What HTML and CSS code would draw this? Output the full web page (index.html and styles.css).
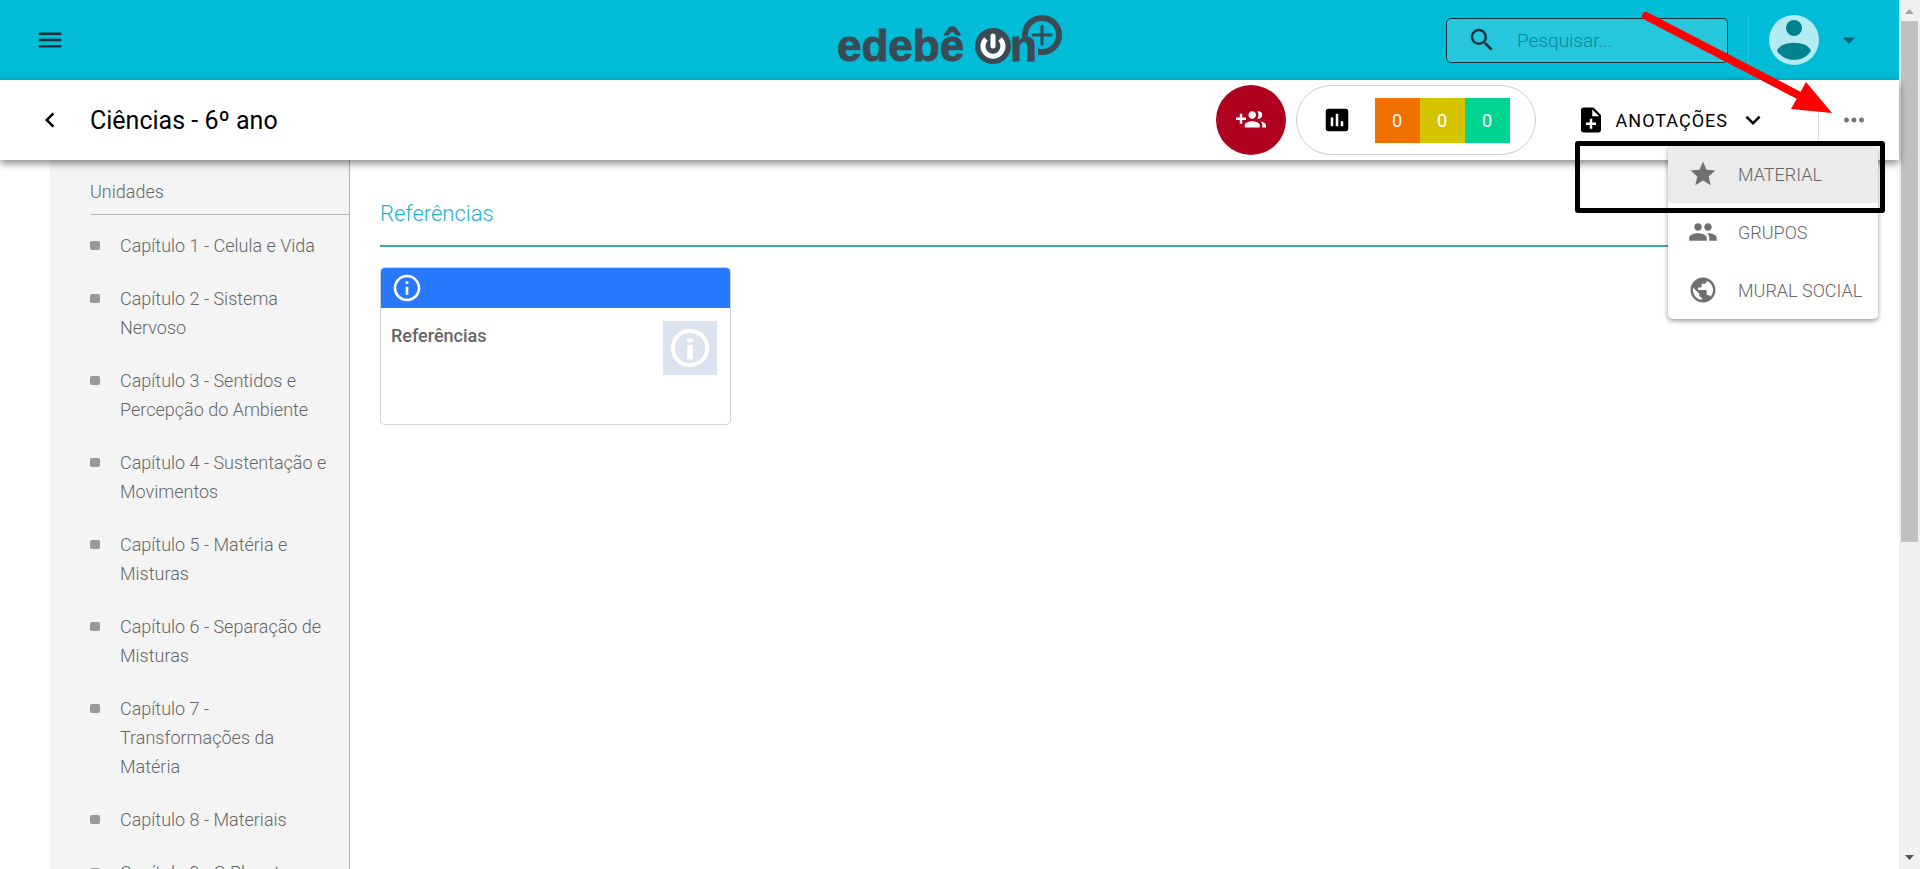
FILE: index.html
```html
<!DOCTYPE html>
<html lang="pt-BR">
    <head>
        <meta charset="utf-8">
        <title>Ciências - 6º ano</title>
        <link rel="stylesheet" href="styles.css">
    </head>
    <body>
        <div class="app">
            <header class="topbar">
                <button type="button" class="icon-button" aria-label="Menu">
                    <svg class="icon" viewBox="0 0 24 24"><path d="M3 18h18v-2H3v2zm0-5h18v-2H3v2zm0-7v2h18V6H3z"/></svg>
                </button>
                <a href="#" class="logo" aria-label="edebê On+">
                    <svg width="230" height="60" viewBox="0 0 230 60">
                        <text x="2" y="51" class="logo-text">edebê</text>
                        <circle cx="207" cy="25" r="17" fill="none" stroke="#3b4a54" stroke-width="6"/>
                        <path d="M207 16v18M198 25h18" fill="none" stroke="#3b4a54" stroke-width="3" stroke-linecap="round"/>
                        <path d="M176 27h13l2 3c4-4 11-3 13 1l-1 4v17h-27z" fill="#00bcd7"/>
                        <text x="175" y="51" class="logo-text">n</text>
                        <circle cx="158" cy="36" r="18" fill="#3b4a54"/>
                        <path d="M151 29a10 10 0 1 0 14 0" fill="none" stroke="#fff" stroke-width="5"/>
                        <path d="M158 26v10" fill="none" stroke="#fff" stroke-width="5" stroke-linecap="round"/>
                    </svg>
                </a>
                <div class="topbar-right">
                    <label class="search">
                        <svg class="icon" viewBox="0 0 24 24"><path d="M15.5 14h-.79l-.28-.27A6.471 6.471 0 0 0 16 9.5 6.5 6.5 0 1 0 9.5 16c1.61 0 3.09-.59 4.23-1.57l.27.28v.79l5 4.99L20.49 19l-4.99-5zm-6 0C7.01 14 5 11.99 5 9.5S7.01 5 9.5 5 14 7.01 14 9.5 11.99 14 9.5 14z"/></svg>
                        <input type="text" placeholder="Pesquisar..." aria-label="Pesquisar">
                    </label>
                    <button type="button" class="user" aria-label="Conta">
                        <svg class="avatar" viewBox="0 0 50 50">
                            <circle cx="25" cy="25" r="25" fill="#b2ebf2"/>
                            <circle cx="25" cy="13" r="8" fill="#00838f"/>
                            <path d="M8 36c3-11 31-11 34 0-8 12-26 12-34 0z" fill="#00838f"/>
                        </svg>
                        <svg class="icon caret" viewBox="0 0 24 24"><path d="M7 10l5 5 5-5z"/></svg>
                    </button>
                </div>
            </header>

            <div class="subbar">
                <button type="button" class="icon-button" aria-label="Voltar">
                    <svg class="icon" viewBox="0 0 24 24"><path d="M15.41 7.41L14 6l-6 6 6 6 1.41-1.41L10.83 12z"/></svg>
                </button>
                <h1>Ciências - 6º ano</h1>
                <button type="button" class="add-group" aria-label="Adicionar grupo">
                    <svg class="icon" viewBox="0 0 24 24"><path d="M8 10H5V7H3v3H0v2h3v3h2v-3h3v-2zm10 1c1.66 0 2.99-1.34 2.99-3S19.66 5 18 5c-.32 0-.63.05-.91.14.57.81.9 1.79.9 2.86s-.34 2.04-.9 2.86c.28.09.59.14.91.14zm-5 0c1.66 0 2.99-1.34 2.99-3S14.66 5 13 5c-1.66 0-3 1.34-3 3s1.34 3 3 3zm6.62 2.16c.83.73 1.38 1.66 1.38 2.84v2h3v-2c0-1.54-2.37-2.49-4.38-2.84zM13 13c-2 0-6 1-6 3v2h12v-2c0-2-4-3-6-3z"/></svg>
                </button>
                <div class="scores">
                    <svg class="icon" viewBox="0 0 24 24"><path d="M19 3H5c-1.1 0-2 .9-2 2v14c0 1.1.9 2 2 2h14c1.1 0 2-.9 2-2V5c0-1.1-.9-2-2-2zM9 17H7v-7h2v7zm4 0h-2V7h2v10zm4 0h-2v-4h2v4z"/></svg>
                    <div class="score-list">
                        <span class="score orange">0</span>
                        <span class="score yellow">0</span>
                        <span class="score green">0</span>
                    </div>
                </div>
                <button type="button" class="notes">
                    <svg class="icon" viewBox="0 0 24 24"><path d="M14 2H6c-1.1 0-1.99.9-1.99 2L4 20c0 1.1.89 2 1.99 2H18c1.1 0 2-.9 2-2V8l-6-6zm2 14h-3v3h-2v-3H8v-2h3v-3h2v3h3v2zm-3-7V3.5L18.5 9H13z"/></svg>
                    <span>ANOTAÇÕES</span>
                    <svg class="icon" viewBox="0 0 24 24"><path d="M16.59 8.59L12 13.17 7.41 8.59 6 10l6 6 6-6z"/></svg>
                </button>
                <div class="more">
                    <button type="button" class="icon-button" aria-label="Mais opções">
                        <svg class="icon" viewBox="0 0 24 24"><path d="M6 10c-1.1 0-2 .9-2 2s.9 2 2 2 2-.9 2-2-.9-2-2-2zm12 0c-1.1 0-2 .9-2 2s.9 2 2 2 2-.9 2-2-.9-2-2-2zm-6 0c-1.1 0-2 .9-2 2s.9 2 2 2 2-.9 2-2-.9-2-2-2z"/></svg>
                    </button>
                    <nav class="more-menu">
                        <a href="#" class="active">
                            <svg class="icon" viewBox="0 0 24 24"><path d="M12 17.27L18.18 21l-1.64-7.03L22 9.24l-7.19-.61L12 2 9.19 8.63 2 9.24l5.46 4.73L5.82 21z"/></svg>
                            MATERIAL
                        </a>
                        <a href="#">
                            <svg class="icon" viewBox="0 0 24 24"><path d="M16 11c1.66 0 2.99-1.34 2.99-3S17.66 5 16 5c-1.66 0-3 1.34-3 3s1.34 3 3 3zm-8 0c1.66 0 2.99-1.34 2.99-3S9.66 5 8 5C6.34 5 5 6.34 5 8s1.34 3 3 3zm0 2c-2.33 0-7 1.17-7 3.5V19h14v-2.5c0-2.33-4.67-3.5-7-3.5zm8 0c-.29 0-.62.02-.97.05 1.16.84 1.97 1.97 1.97 3.45V19h6v-2.5c0-2.33-4.67-3.5-7-3.5z"/></svg>
                            GRUPOS
                        </a>
                        <a href="#">
                            <svg class="icon" viewBox="0 0 24 24"><path d="M12 2C6.48 2 2 6.48 2 12s4.48 10 10 10 10-4.48 10-10S17.52 2 12 2zm-1 17.93c-3.95-.49-7-3.85-7-7.93 0-.62.08-1.21.21-1.79L9 15v1c0 1.1.9 2 2 2v1.93zm6.9-2.54c-.26-.81-1-1.39-1.9-1.39h-1v-3c0-.55-.45-1-1-1H8v-2h2c.55 0 1-.45 1-1V7h2c1.1 0 2-.9 2-2v-.41c2.93 1.19 5 4.06 5 7.41 0 2.08-.8 3.97-2.1 5.39z"/></svg>
                            MURAL SOCIAL
                        </a>
                        <div class="highlight"></div>
                    </nav>
                </div>
                <svg class="arrow" viewBox="0 0 194 106" width="194" height="106">
                    <path d="M4 4l154 80" stroke="#f00" stroke-width="8" stroke-linecap="round"/>
                    <path d="M190 101l-41-4 15-27z" fill="#f00"/>
                </svg>
            </div>

            <div class="content">
                <aside class="sidebar">
                    <h2>Unidades</h2>
                    <ul>
                        <li><a href="#">Capítulo 1 - Celula e Vida</a></li>
                        <li><a href="#">Capítulo 2 - Sistema Nervoso</a></li>
                        <li><a href="#">Capítulo 3 - Sentidos e Percepção do Ambiente</a></li>
                        <li><a href="#">Capítulo 4 - Sustentação e Movimentos</a></li>
                        <li><a href="#">Capítulo 5 - Matéria e Misturas</a></li>
                        <li><a href="#">Capítulo 6 - Separação de Misturas</a></li>
                        <li><a href="#">Capítulo 7 - Transformações da Matéria</a></li>
                        <li><a href="#">Capítulo 8 - Materiais</a></li>
                        <li><a href="#">Capítulo 9 - O Planeta</a></li>
                    </ul>
                </aside>
                <main>
                    <h2>Referências</h2>
                    <article class="card">
                        <div class="card-header">
                            <svg viewBox="0 0 24 24" width="32" height="32"><path d="M11 17h2v-6h-2v6zm1-15C6.48 2 2 6.48 2 12s4.48 10 10 10 10-4.48 10-10S17.52 2 12 2zm0 18c-4.41 0-8-3.59-8-8s3.59-8 8-8 8 3.59 8 8-3.59 8-8 8zM11 9h2V7h-2v2z"/></svg>
                        </div>
                        <div class="card-body">
                            <h3>Referências</h3>
                            <div class="thumb">
                                <svg viewBox="0 0 24 24" width="46" height="46"><path d="M10.500 18h3v-7.500h-3v7.500zm1.500-16C6.48 2 2 6.48 2 12s4.48 10 10 10 10-4.48 10-10S17.52 2 12 2zm0 18c-4.41 0-8-3.59-8-8s3.59-8 8-8 8 3.59 8 8-3.59 8-8 8zM10.500 9h3V7h-3v2z"/></svg>
                            </div>
                        </div>
                    </article>
                </main>
            </div>
        </div>

        <div class="scrollbar">
            <svg viewBox="0 0 21 21" width="21" height="21"><path d="M6 14h9l-4.5-5z" fill="#a3a3a3"/></svg>
            <div class="track"><div class="thumb-bar"></div></div>
            <svg viewBox="0 0 21 21" width="21" height="21"><path d="M6 7h9l-4.5 5z" fill="#505050"/></svg>
        </div>
    </body>
</html>
```

FILE: styles.css
```css
* {
    box-sizing: border-box;
}

body {
    margin: 0;
    display: flex;
    height: 100vh;
    overflow: hidden;
    background: #fff;
    font-family: Roboto, "Noto Sans", sans-serif;
    font-size: 18px;
    font-weight: 300;
    color: #666;
}

h1, h2, h3 {
    margin: 0;
    font-weight: 300;
}

a {
    color: inherit;
    text-decoration: none;
}

button {
    padding: 0;
    border: none;
    background: none;
    font: inherit;
    color: inherit;
    cursor: pointer;
}

svg {
    display: block;
    flex: none;
}

.icon {
    width: 30px;
    height: 30px;
    fill: currentColor;
}

.app {
    flex: 1;
    min-width: 0;
    display: flex;
    flex-direction: column;
}

/* Top bar */
.topbar {
    flex: none;
    display: grid;
    grid-template-columns: 1fr auto 1fr;
    align-items: center;
    height: 80px;
    padding: 0 35px;
    background: #00bcd7;
    color: #123038;
}

.topbar .icon-button {
    justify-self: start;
}

.logo-text {
    font-family: "Liberation Sans", Arial, sans-serif;
    font-size: 44px;
    font-weight: 700;
    fill: #3b4a54;
    stroke: #3b4a54;
    stroke-width: 1px;
}

.topbar-right {
    display: flex;
    align-items: center;
    justify-content: flex-end;
    gap: 20px;
}

.search {
    display: flex;
    align-items: center;
    gap: 20px;
    width: 282px;
    height: 45px;
    padding: 0 20px;
    border: 1px solid #123038;
    border-radius: 5px;
    background: #26c6dc;
}

.search input {
    flex: 1;
    min-width: 0;
    padding: 0;
    border: none;
    outline: none;
    background: none;
    font: inherit;
    font-size: 19px;
    color: #00838f;
}

.search input::placeholder {
    color: #00899a;
}

.user {
    display: flex;
    align-items: center;
    gap: 15px;
    padding-left: 20px;
    border-left: 1px solid #26c6dc;
    color: #00606d;
}

.avatar {
    width: 50px;
    height: 50px;
}

/* Course bar */
.subbar {
    position: relative;
    z-index: 1;
    flex: none;
    display: flex;
    align-items: center;
    height: 80px;
    padding: 0 30px 0 35px;
    background: #fff;
    box-shadow: 0 3px 8px rgba(0, 0, 0, 0.5);
    color: #000;
}

h1 {
    flex: 1;
    margin-left: 25px;
    font-size: 25px;
    font-weight: 400;
}

.add-group {
    display: flex;
    align-items: center;
    justify-content: center;
    width: 70px;
    height: 70px;
    border-radius: 50%;
    background: #b00020;
    color: #fff;
}

.scores {
    display: flex;
    align-items: center;
    justify-content: space-between;
    width: 240px;
    height: 70px;
    margin-left: 10px;
    padding: 0 25px;
    border: 1px solid #ccc;
    border-radius: 35px;
}

.score-list {
    display: flex;
}

.score {
    width: 45px;
    font-weight: 400;
    line-height: 45px;
    text-align: center;
    color: #fff;
}

.orange {
    background: #f07000;
}

.yellow {
    background: #d4c400;
}

.green {
    background: #00d490;
}

.notes {
    display: flex;
    align-items: center;
    gap: 10px;
    margin-left: 40px;
    font-weight: 400;
    letter-spacing: 1px;
}

.more {
    position: relative;
    display: flex;
    align-items: center;
    height: 50px;
    margin-left: 50px;
    padding-left: 20px;
    border-left: 1px solid #ddd;
    color: #757575;
}

.more-menu {
    position: absolute;
    top: 50px;
    right: -9px;
    width: 210px;
    border-radius: 5px;
    background: #fff;
    box-shadow: 0 2px 5px rgba(0, 0, 0, 0.4);
    color: #666;
}

.more-menu a {
    display: flex;
    align-items: center;
    gap: 20px;
    height: 58px;
    padding-left: 20px;
    white-space: nowrap;
}

.more-menu .icon {
    color: #707070;
}

.more-menu .active {
    background: #ebebeb;
}

.highlight {
    position: absolute;
    top: -4px;
    right: -7px;
    width: 310px;
    height: 72px;
    border: 5px solid #000;
    border-radius: 3px;
}

.arrow {
    position: absolute;
    top: -68px;
    right: 63px;
    pointer-events: none;
}

/* Content */
.content {
    flex: 1;
    min-height: 0;
    display: flex;
    padding-left: 50px;
}

.sidebar {
    flex: none;
    width: 300px;
    padding: 14px 0 0 40px;
    border-right: 1px solid #b5b5b5;
    background: #f4f4f4;
    overflow: hidden;
}

.sidebar h2 {
    height: 41px;
    border-bottom: 1px solid #b5b5b5;
    font-size: 18px;
    line-height: 36px;
}

.sidebar ul {
    margin: 0;
    padding: 16px 17px 0 0;
    list-style: none;
}

.sidebar li {
    display: flex;
    gap: 20px;
    margin-bottom: 24px;
    line-height: 29px;
}

.sidebar li::before {
    content: "";
    flex: none;
    width: 10px;
    height: 9px;
    margin-top: 10px;
    border-radius: 2px;
    background: #999;
}

main {
    flex: 1;
    padding: 30px 30px 0;
}

main h2 {
    height: 57px;
    border-bottom: 2px solid #3aabb5;
    font-size: 22px;
    line-height: 48px;
    color: #1cb4ca;
}

.card {
    width: 351px;
    height: 158px;
    margin-top: 20px;
    border: 1px solid #d0d3d6;
    border-radius: 5px;
    overflow: hidden;
}

.card-header {
    display: flex;
    align-items: center;
    height: 40px;
    padding-left: 10px;
    background: #2979ff;
}

.card svg {
    fill: #fff;
}

.card-body {
    display: flex;
    justify-content: space-between;
    padding: 13px 13px 0 10px;
}

.card h3 {
    font-size: 18px;
    font-weight: 500;
    line-height: 29px;
}

.thumb {
    display: flex;
    align-items: center;
    justify-content: center;
    width: 54px;
    height: 54px;
    background: #dce3f0;
}

/* Page scrollbar */
.scrollbar {
    flex: none;
    display: flex;
    flex-direction: column;
    width: 21px;
    background: #f0f0f0;
}

.track {
    flex: 1;
    padding: 0 2px;
}

.thumb-bar {
    height: 63%;
    background: #c1c1c1;
}
```
